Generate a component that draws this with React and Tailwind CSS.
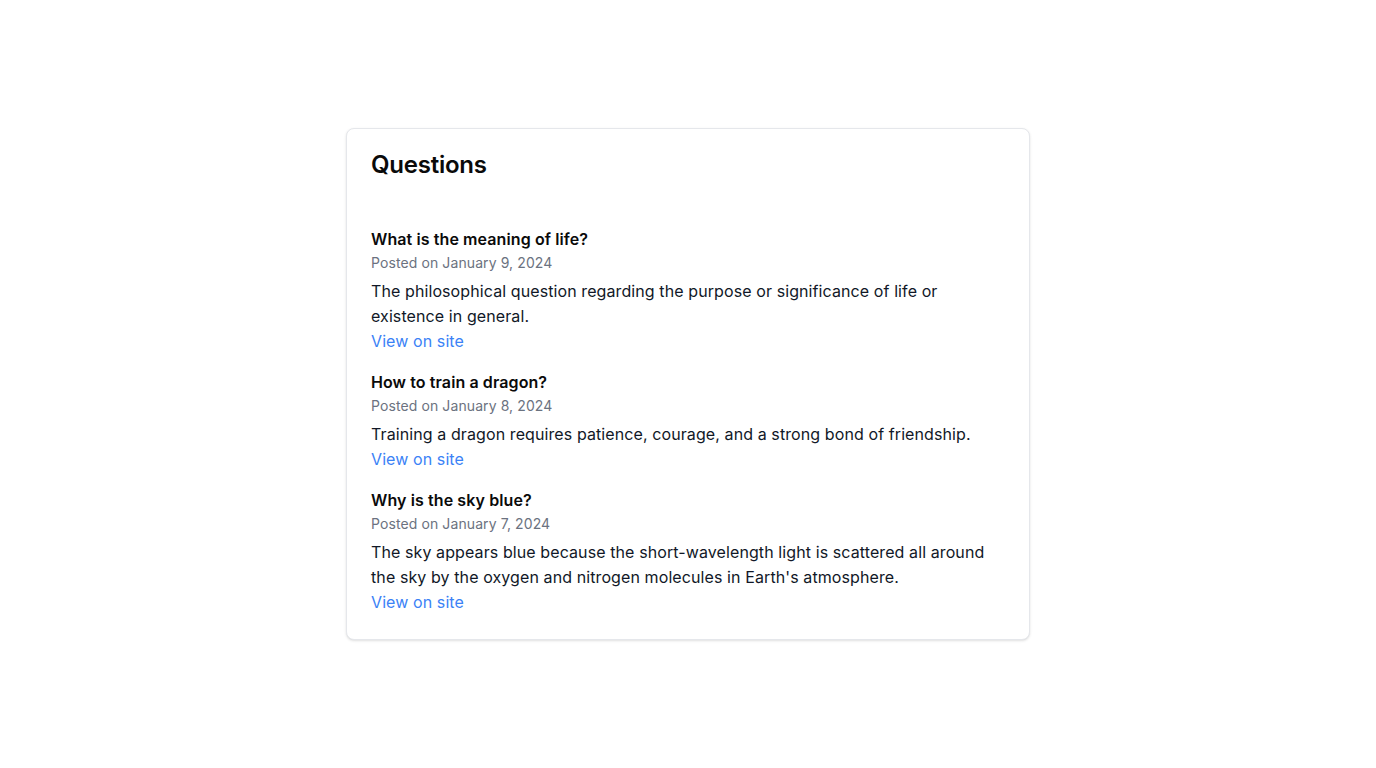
const QUESTIONS = [
  {
    title: 'What is the meaning of life?',
    date: 'January 9, 2024',
    body: 'The philosophical question regarding the purpose or significance of life or existence in general.',
  },
  {
    title: 'How to train a dragon?',
    date: 'January 8, 2024',
    body: 'Training a dragon requires patience, courage, and a strong bond of friendship.',
  },
  {
    title: 'Why is the sky blue?',
    date: 'January 7, 2024',
    body: "The sky appears blue because the short-wavelength light is scattered all around the sky by the oxygen and nitrogen molecules in Earth's atmosphere.",
  },
]

export default function App() {
  return (
    <div className="min-h-screen bg-white flex items-center justify-center font-['Inter',sans-serif] text-[#0a0a0a] tracking-[0.006em]">
      <div className="w-[684px] bg-white border border-gray-200 rounded-lg shadow-sm p-6">
        <h2 className="text-2xl font-semibold leading-none tracking-[-0.01em]">Questions</h2>

        {/* ── List ── */}
        <div className="mt-[50px] space-y-4">
          {QUESTIONS.map(q => (
            <div key={q.title}>
              <h3 className="text-base font-semibold leading-6">{q.title}</h3>
              <p className="mt-0.5 text-sm leading-5 text-[#6b7280]">Posted on {q.date}</p>
              <p className="mt-1.5 text-base leading-[25px] text-[#111827]">{q.body}</p>
              <a href="#" className="block text-base leading-[25px] text-[#3b82f6] hover:underline">
                View on site
              </a>
            </div>
          ))}
        </div>
      </div>
    </div>
  )
}
